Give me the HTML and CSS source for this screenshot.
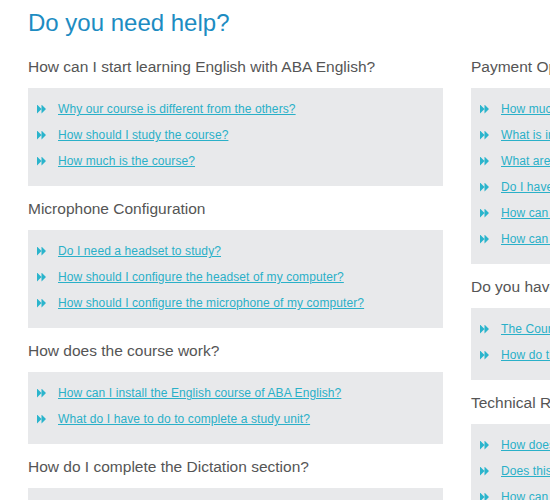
FILE: index.html
```
<!DOCTYPE html>
<html lang="en">
<head>
    <meta charset="UTF-8">
    <meta name="viewport" content="width=device-width, initial-scale=1.0">
    <title>Help</title>
    <link rel="stylesheet" href="styles.css">
</head>
<body>
<div class="container">
    <h1>Do you need help?</h1>
    <div class="columns">
        <div class="column">
            <h2>How can I start learning English with ABA English?</h2>
            <ul class="faq">
                <li><a href="#">Why our course is different from the others?</a></li>
                <li><a href="#">How should I study the course?</a></li>
                <li><a href="#">How much is the course?</a></li>
            </ul>
            <h2>Microphone Configuration</h2>
            <ul class="faq">
                <li><a href="#">Do I need a headset to study?</a></li>
                <li><a href="#">How should I configure the headset of my computer?</a></li>
                <li><a href="#">How should I configure the microphone of my computer?</a></li>
            </ul>
            <h2>How does the course work?</h2>
            <ul class="faq">
                <li><a href="#">How can I install the English course of ABA English?</a></li>
                <li><a href="#">What do I have to do to complete a study unit?</a></li>
            </ul>
            <h2>How do I complete the Dictation section?</h2>
            <ul class="faq">
                <li><a href="#">How should I do the dictation exercises?</a></li>
                <li><a href="#">Can I repeat a dictation?</a></li>
            </ul>
        </div>
        <div class="column">
            <h2>Payment Options</h2>
            <ul class="faq">
                <li><a href="#">How much does the course cost?</a></li>
                <li><a href="#">What is included in the price?</a></li>
                <li><a href="#">What are the payment methods?</a></li>
                <li><a href="#">Do I have to pay every month?</a></li>
                <li><a href="#">How can I cancel my subscription?</a></li>
                <li><a href="#">How can I get an invoice?</a></li>
            </ul>
            <h2>Do you have any problems with the course?</h2>
            <ul class="faq">
                <li><a href="#">The Course does not load</a></li>
                <li><a href="#">How do the exercises work?</a></li>
            </ul>
            <h2>Technical Requirements</h2>
            <ul class="faq">
                <li><a href="#">How does the course work on my computer?</a></li>
                <li><a href="#">Does this course work on a Mac?</a></li>
                <li><a href="#">How can I check my internet connection?</a></li>
            </ul>
        </div>
    </div>
</div>
</body>
</html>
```
FILE: styles.css
```
*{
    margin: 0px;
    padding: 0px;
    box-sizing: border-box;
}
html, body{
    overflow: hidden;
}
body{
    font-family: "Liberation Sans", Arial, sans-serif;
    background: white;
}
.container{
    width: 900px;
    padding: 9px 0px 0px 28px;
}
h1{
    font-size: 24px;
    font-weight: normal;
    color: #1d8cc2;
    line-height: 28px;
}
.columns{
    display: flex;
    gap: 28px;
    margin-top: 20px;
}
.column{
    width: 415px;
}
h2{
    font-size: 15.5px;
    font-weight: normal;
    color: #555;
    line-height: 20px;
    margin-top: 13px;
    margin-bottom: 11px;
}
.column h2:first-child{
    margin-top: 0px;
}
.faq{
    list-style: none;
    background: #e8e9eb;
    padding: 8px 0px 12px 0px;
}
.faq li{
    display: flex;
    align-items: center;
    height: 26px;
    padding-left: 9px;
    font-size: 12px;
    letter-spacing: 0.1px;
}
.faq li::before{
    content: "";
    width: 9px;
    height: 9px;
    margin-right: 12px;
    background: #2ab4cc;
    clip-path: polygon(0 0, 50% 50%, 50% 0, 100% 50%, 50% 100%, 50% 50%, 0 100%);
}
.faq a{
    color: #2ab0c8;
}
```
